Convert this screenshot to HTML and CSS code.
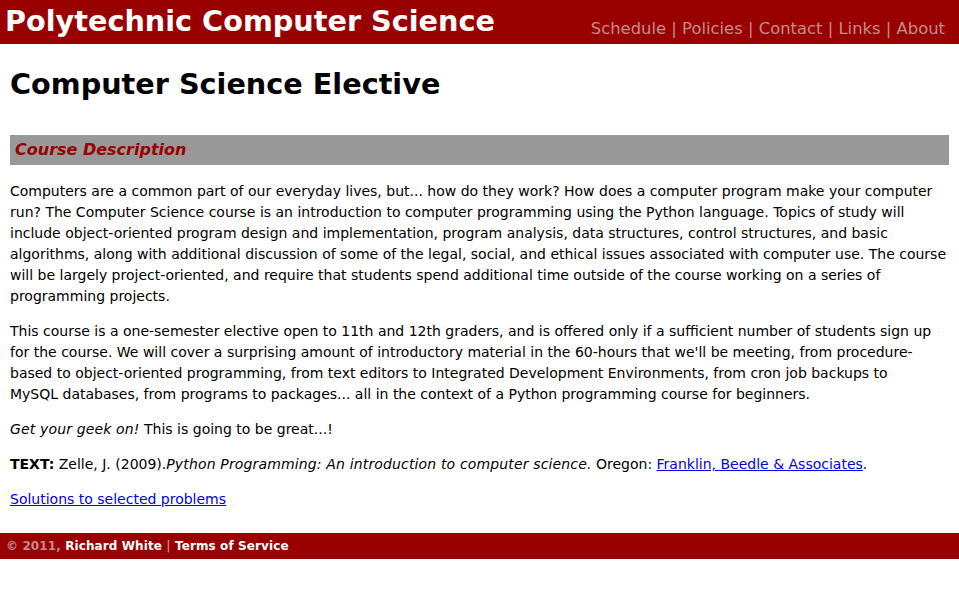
FILE: index.html
```html
<!DOCTYPE html>
<html>
<head>
<meta charset="utf-8">
<title>Computer Science Elective</title>
<link rel="stylesheet" href="styles.css">
</head>
<body>
<header class="masthead">
  <div class="site-title">Polytechnic Computer Science</div>
  <nav class="nav">
    <a href="#">Schedule</a> <span class="sep">|</span>
    <a href="#">Policies</a> <span class="sep">|</span>
    <a href="#">Contact</a> <span class="sep">|</span>
    <a href="#">Links</a> <span class="sep">|</span>
    <a href="#">About</a>
  </nav>
</header>
<main class="content">
  <h1 class="page-title">Computer Science Elective</h1>
  <h2 class="section-bar">Course Description</h2>
  <p>Computers are a common part of our everyday lives, but... how do they work? How does a computer program make your computer run? The Computer Science course is an introduction to computer programming using the Python language. Topics of study will include object-oriented program design and implementation, program analysis, data structures, control structures, and basic algorithms, along with additional discussion of some of the legal, social, and ethical issues associated with computer use. The course will be largely project-oriented, and require that students spend additional time outside of the course working on a series of programming projects.</p>
  <p>This course is a one-semester elective open to 11th and 12th graders, and is offered only if a sufficient number of students sign up for the course. We will cover a surprising amount of introductory material in the 60-hours that we'll be meeting, from procedure-based to object-oriented programming, from text editors to Integrated Development Environments, from cron job backups to <span class="nowrap">MySQL databases,</span> from programs to packages... all in the context of a Python programming course for beginners.</p>
  <p><em>Get your geek on!</em> This is going to be great...!</p>
  <p><strong>TEXT:</strong> Zelle, J. (2009).<em>Python Programming: An introduction to computer science.</em> Oregon: <a href="#">Franklin, Beedle &amp; Associates</a>.</p>
  <p class="last"><a href="#">Solutions to selected problems</a></p>
</main>
<footer class="footer">
  <span class="muted">© 2011,</span> <a href="#">Richard White</a> <span class="muted">|</span> <a href="#">Terms of Service</a>
</footer>
</body>
</html>
```
FILE: styles.css
```css
html, body {
  margin: 0;
  padding: 0;
  background: #fff;
}
body {
  font-family: "DejaVu Sans", Verdana, sans-serif;
  font-size: 14px;
  line-height: 21px;
  color: #000;
}
.nowrap {
  white-space: nowrap;
}
.masthead {
  background: #990000;
  height: 44px;
  display: flex;
  justify-content: space-between;
  align-items: flex-end;
  padding: 0 14px 0 5px;
}
.site-title {
  color: #fff;
  font-weight: bold;
  font-size: 28.7px;
  line-height: 44px;
  align-self: center;
  padding-bottom: 3px;
}
.nav {
  font-size: 16.4px;
  line-height: 20px;
  padding-bottom: 5px;
  color: #c48c8c;
}
.nav a {
  color: #c48c8c;
  text-decoration: none;
}
.content {
  padding: 0 10px;
}
.page-title {
  font-size: 28.7px;
  line-height: 36px;
  margin: 22px 0 33px;
}
.section-bar {
  background: #999;
  color: #990000;
  font-style: italic;
  font-size: 16px;
  line-height: 30px;
  margin: 0 0 16px;
  padding: 0 5px;
}
.content p {
  margin: 0 0 14px;
}
.content em {
  letter-spacing: 0.15px;
}
.content p.last {
  margin-bottom: 0;
  padding-bottom: 23px;
}
.content a {
  color: #0000ee;
}
.footer {
  background: #990000;
  height: 26px;
  line-height: 26px;
  padding: 0 6px;
  font-size: 12px;
  letter-spacing: 0.1px;
  font-weight: bold;
  color: #fff;
}
.footer a {
  color: #fff;
  text-decoration: none;
}
.footer .muted {
  color: #c48c8c;
}
```
